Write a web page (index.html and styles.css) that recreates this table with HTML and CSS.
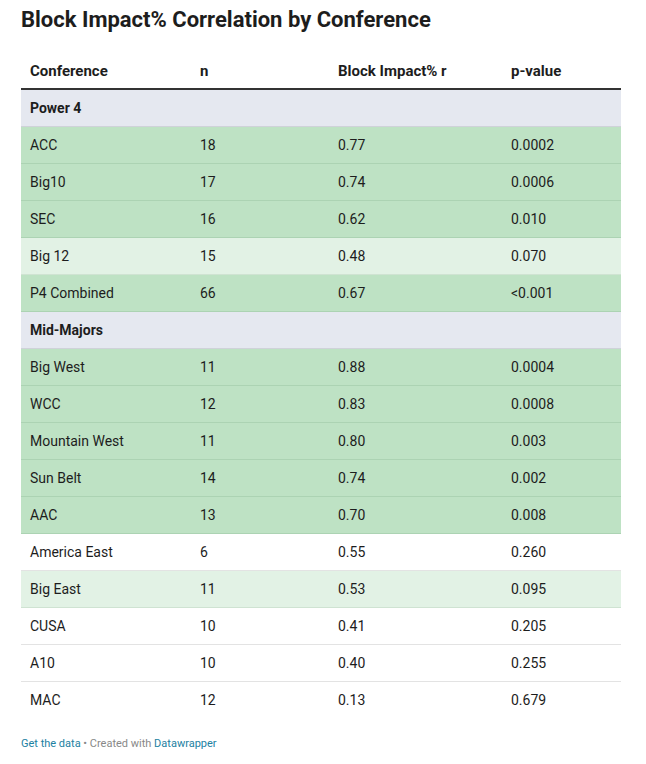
FILE: index.html
```html
<!DOCTYPE html>
<html>
<head>
<meta charset="utf-8">
<link rel="stylesheet" href="styles.css">
</head>
<body>
<div class="chart">
  <h1 class="title">Block Impact% Correlation by Conference</h1>
  <table class="tbl">
    <colgroup>
      <col class="c1"><col class="c2"><col class="c3"><col class="c4">
    </colgroup>
    <thead>
      <tr><th>Conference</th><th>n</th><th>Block Impact% r</th><th>p-value</th></tr>
    </thead>
    <tbody>
      <tr class="group"><td colspan="4">Power 4</td></tr>
      <tr class="strong"><td>ACC</td><td>18</td><td>0.77</td><td>0.0002</td></tr>
      <tr class="strong"><td>Big10</td><td>17</td><td>0.74</td><td>0.0006</td></tr>
      <tr class="strong"><td>SEC</td><td>16</td><td>0.62</td><td>0.010</td></tr>
      <tr class="weak"><td>Big 12</td><td>15</td><td>0.48</td><td>0.070</td></tr>
      <tr class="strong"><td>P4 Combined</td><td>66</td><td>0.67</td><td>&lt;0.001</td></tr>
      <tr class="group"><td colspan="4">Mid-Majors</td></tr>
      <tr class="strong"><td>Big West</td><td>11</td><td>0.88</td><td>0.0004</td></tr>
      <tr class="strong"><td>WCC</td><td>12</td><td>0.83</td><td>0.0008</td></tr>
      <tr class="strong"><td>Mountain West</td><td>11</td><td>0.80</td><td>0.003</td></tr>
      <tr class="strong"><td>Sun Belt</td><td>14</td><td>0.74</td><td>0.002</td></tr>
      <tr class="strong"><td>AAC</td><td>13</td><td>0.70</td><td>0.008</td></tr>
      <tr><td>America East</td><td>6</td><td>0.55</td><td>0.260</td></tr>
      <tr class="weak"><td>Big East</td><td>11</td><td>0.53</td><td>0.095</td></tr>
      <tr><td>CUSA</td><td>10</td><td>0.41</td><td>0.205</td></tr>
      <tr><td>A10</td><td>10</td><td>0.40</td><td>0.255</td></tr>
      <tr class="last"><td>MAC</td><td>12</td><td>0.13</td><td>0.679</td></tr>
    </tbody>
  </table>
  <div class="footer"><a class="link">Get the data</a><span class="sep"> • </span><span class="meta">Created with </span><a class="link">Datawrapper</a></div>
</div>
</body>
</html>
```

FILE: styles.css
```css
html, body {
  margin: 0;
  padding: 0;
  background: #ffffff;
}
body {
  font-family: Roboto, "Liberation Sans", sans-serif;
  color: #1d1d1d;
}
.chart {
  width: 600px;
  padding: 0 0 0 21px;
}
.title {
  margin: 0;
  padding-top: 7px;
  font-size: 22px;
  line-height: 26px;
  font-weight: 700;
  color: #1d1d1d;
  height: 45px;
}
.tbl {
  width: 600px;
  border-collapse: collapse;
  table-layout: fixed;
  font-size: 14px;
  line-height: 18px;
}
.c1 { width: 170px; }
.c2 { width: 138px; }
.c3 { width: 173px; }
.c4 { width: 119px; }
.tbl th {
  text-align: left;
  font-weight: 700;
  font-size: 15px;
  padding: 10px 9px 8px 9px;
  border-bottom: 2px solid #333333;
}
.tbl td {
  padding: 9px 9px;
  border-bottom: 1px solid #e3e3e3;
  white-space: nowrap;
}
.tbl tr.group td {
  background: #e5e8f0;
  font-weight: 700;
  border-bottom-color: #cfd2d9;
}
.tbl tr.strong td {
  background: #bee2c4;
  border-bottom-color: #acd3b3;
}
.tbl tr.weak td {
  background: #e2f2e5;
  border-bottom-color: #cfe3d2;
}
.tbl tr.last td {
  border-bottom: none;
}
.footer {
  margin-top: 19px;
  font-size: 11px;
  line-height: 14px;
  color: #888888;
}
.link {
  color: #1d81a2;
  text-decoration: none;
}
.sep {
  color: #888888;
}
```
